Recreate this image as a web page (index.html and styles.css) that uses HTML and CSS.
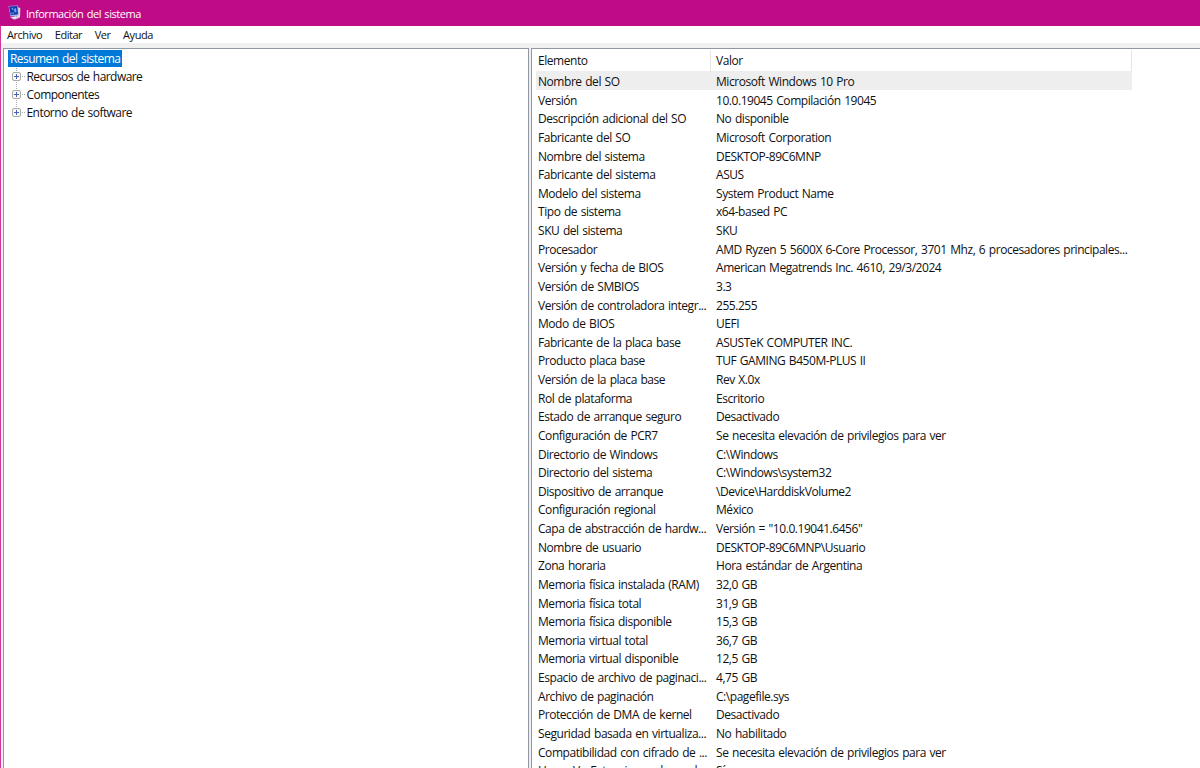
FILE: index.html
```
<!DOCTYPE html>
<html lang="es">
<head>
    <meta charset="UTF-8">
    <meta name="viewport" content="width=device-width, initial-scale=1.0">
    <title>Información del sistema</title>
    <link rel="stylesheet" href="styles.css">
</head>
<body>

    <header class="title-bar">
        <svg class="app-icon" width="13" height="15" viewBox="0 0 13 15">
            <path d="M2 12.5 L8 11 L12 12.5 L6.5 14.8 Z" fill="#c9c4d2"/>
            <path d="M9 2 L12.3 3 L12 12 L9 13.5 Z" fill="#d5d8e2"/>
            <path d="M0.5 1 L10 0.5 L11 10.5 L2.5 11.5 Z" fill="#a9bcec"/>
            <path d="M1 1.5 L9.3 1 L10 9.3 L2.8 10.3 Z" fill="#1638a8"/>
            <path d="M3 4 L5 2.5 L5.5 5 Z M6 4 L8 3 L8.5 7 L6.5 7.5 Z" fill="#6fa4f0"/>
            <path d="M3 8 L5.5 7 L6 9 L3.2 9.3 Z" fill="#4c7fe0"/>
            <path d="M4 12.2 L8 11.8 L8.5 13 L5 13.4 Z" fill="#f4f4f8"/>
        </svg>
        <span>Información del sistema</span>
    </header>

    <nav class="menu-bar">
        <span>Archivo</span>
        <span>Editar</span>
        <span>Ver</span>
        <span>Ayuda</span>
    </nav>

    <main class="panels">
        <section class="tree">
            <div class="tree-root">Resumen del sistema</div>
            <ul>
                <li><i class="expand"></i><span>Recursos de hardware</span></li>
                <li><i class="expand"></i><span>Componentes</span></li>
                <li><i class="expand"></i><span>Entorno de software</span></li>
            </ul>
        </section>

        <section class="details">
            <div class="row head"><span>Elemento</span><span>Valor</span></div>
            <div class="row selected"><span>Nombre del SO</span><span>Microsoft Windows 10 Pro</span></div>
            <div class="row"><span>Versión</span><span>10.0.19045 Compilación 19045</span></div>
            <div class="row"><span>Descripción adicional del SO</span><span>No disponible</span></div>
            <div class="row"><span>Fabricante del SO</span><span>Microsoft Corporation</span></div>
            <div class="row"><span>Nombre del sistema</span><span>DESKTOP-89C6MNP</span></div>
            <div class="row"><span>Fabricante del sistema</span><span>ASUS</span></div>
            <div class="row"><span>Modelo del sistema</span><span>System Product Name</span></div>
            <div class="row"><span>Tipo de sistema</span><span>x64-based PC</span></div>
            <div class="row"><span>SKU del sistema</span><span>SKU</span></div>
            <div class="row"><span>Procesador</span><span>AMD Ryzen 5 5600X 6-Core Processor, 3701 Mhz, 6 procesadores principales...</span></div>
            <div class="row"><span>Versión y fecha de BIOS</span><span>American Megatrends Inc. 4610, 29/3/2024</span></div>
            <div class="row"><span>Versión de SMBIOS</span><span>3.3</span></div>
            <div class="row"><span>Versión de controladora integr...</span><span>255.255</span></div>
            <div class="row"><span>Modo de BIOS</span><span>UEFI</span></div>
            <div class="row"><span>Fabricante de la placa base</span><span>ASUSTeK COMPUTER INC.</span></div>
            <div class="row"><span>Producto placa base</span><span>TUF GAMING B450M-PLUS II</span></div>
            <div class="row"><span>Versión de la placa base</span><span>Rev X.0x</span></div>
            <div class="row"><span>Rol de plataforma</span><span>Escritorio</span></div>
            <div class="row"><span>Estado de arranque seguro</span><span>Desactivado</span></div>
            <div class="row"><span>Configuración de PCR7</span><span>Se necesita elevación de privilegios para ver</span></div>
            <div class="row"><span>Directorio de Windows</span><span>C:\Windows</span></div>
            <div class="row"><span>Directorio del sistema</span><span>C:\Windows\system32</span></div>
            <div class="row"><span>Dispositivo de arranque</span><span>\Device\HarddiskVolume2</span></div>
            <div class="row"><span>Configuración regional</span><span>México</span></div>
            <div class="row"><span>Capa de abstracción de hardw...</span><span>Versión = "10.0.19041.6456"</span></div>
            <div class="row"><span>Nombre de usuario</span><span>DESKTOP-89C6MNP\Usuario</span></div>
            <div class="row"><span>Zona horaria</span><span>Hora estándar de Argentina</span></div>
            <div class="row"><span>Memoria física instalada (RAM)</span><span>32,0 GB</span></div>
            <div class="row"><span>Memoria física total</span><span>31,9 GB</span></div>
            <div class="row"><span>Memoria física disponible</span><span>15,3 GB</span></div>
            <div class="row"><span>Memoria virtual total</span><span>36,7 GB</span></div>
            <div class="row"><span>Memoria virtual disponible</span><span>12,5 GB</span></div>
            <div class="row"><span>Espacio de archivo de paginaci...</span><span>4,75 GB</span></div>
            <div class="row"><span>Archivo de paginación</span><span>C:\pagefile.sys</span></div>
            <div class="row"><span>Protección de DMA de kernel</span><span>Desactivado</span></div>
            <div class="row"><span>Seguridad basada en virtualiza...</span><span>No habilitado</span></div>
            <div class="row"><span>Compatibilidad con cifrado de ...</span><span>Se necesita elevación de privilegios para ver</span></div>
            <div class="row"><span>Hyper-V - Extensiones de mod...</span><span>Sí</span></div>
        </section>
    </main>

</body>
</html>
```
FILE: styles.css
```
* {
    box-sizing: border-box;
}
body {
    margin: 0;
    height: 100vh;
    overflow: hidden;
    display: flex;
    flex-direction: column;
    background-color: #f0f0f0;
    font-family: "Open Sans", "Noto Sans", sans-serif;
    font-size: 12px;
    letter-spacing: -0.45px;
    word-spacing: 0.9px;
    color: #111;
    white-space: nowrap;
}
.title-bar {
    flex: none;
    display: flex;
    align-items: center;
    height: 26px;
    padding-left: 8px;
    background-color: #bf0c86;
    color: #fff;
    font-size: 11px;
}
.app-icon {
    margin: 0 5px 1px 0;
}
.menu-bar {
    flex: none;
    display: flex;
    gap: 12.5px;
    height: 17px;
    line-height: 18px;
    padding-left: 6px;
    border-left: 1px solid #d0359c;
    background-color: #fff;
    font-size: 11px;
}
.panels {
    flex: 1;
    min-height: 0;
    display: flex;
    gap: 2px;
    padding: 5px 0 0 2px;
    border-left: 1px solid #d0359c;
}
.tree {
    width: 526px;
    padding: 1px 0 0 4px;
    background-color: #fff;
    border: 1px solid #9197a3;
    border-bottom: none;
    letter-spacing: -0.55px;
}
.tree-root {
    width: fit-content;
    height: 17px;
    line-height: 18px;
    padding: 0 2px;
    margin-bottom: 1px;
    background-color: #0078d7;
    color: #fff;
}
.tree ul {
    list-style: none;
    margin: 0;
    padding: 0 0 0 4px;
}
.tree li {
    display: flex;
    align-items: center;
    height: 17.8px;
    line-height: 17.8px;
    background:
        repeating-linear-gradient(#aaa 0 1px, transparent 1px 2px) 4px 0 / 1px 100% no-repeat,
        repeating-linear-gradient(90deg, #aaa 0 1px, transparent 1px 2px) 10px 50% / 4px 1px no-repeat;
}
.tree li:last-child {
    background-size: 1px 50%, 4px 1px;
}
.expand {
    width: 9px;
    height: 9px;
    margin-right: 5.5px;
    border: 1px solid #aaa;
    border-radius: 2px;
    background:
        linear-gradient(#4a62ac, #4a62ac) center / 5px 1px no-repeat,
        linear-gradient(#4a62ac, #4a62ac) center / 1px 5px no-repeat,
        #f8f8f8;
}
.details {
    flex: 1;
    padding: 1px 0 0 4px;
    background-color: #fff;
    border: 1px solid #9197a3;
    border-right: none;
    border-bottom: none;
    overflow: hidden;
}
.row {
    display: grid;
    grid-template-columns: 175px 1fr;
    width: 596px;
    height: 18.63px;
    line-height: 21px;
}
.row span {
    padding-left: 2px;
}
.row span:last-child {
    padding-left: 5px;
}
.head {
    height: 21px;
    line-height: 22px;
}
.head span {
    border-right: 1px solid #e5e5e5;
}
.selected {
    background-color: #eee;
}
```
